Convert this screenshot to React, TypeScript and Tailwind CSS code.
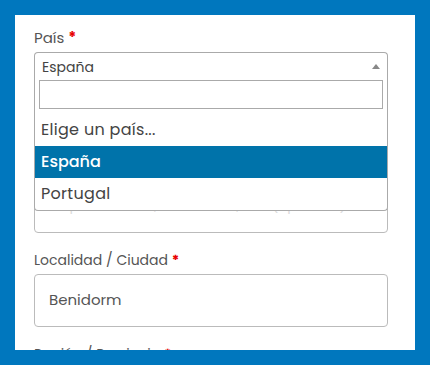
import React from "react";

const font = { fontFamily: "Poppins, Inter, 'Noto Sans', sans-serif" };

function Label({ text }: { text: string }) {
  return (
    <label className="block text-[14px] leading-[20px] text-[#555] mb-[4px]">
      {text} <span className="text-[#e80000] font-bold">*</span>
    </label>
  );
}

export default function App() {
  const options = ["Elige un país...", "España", "Portugal"];

  return (
    <div className="h-[365px] w-[430px] bg-[#0077be] p-[15px] overflow-hidden" style={font}>
      <div className="h-[335px] bg-white pl-[19px] pr-[27px] pt-[13px] overflow-hidden">
        {/* País select, open */}
        <label className="block text-[15px] leading-[20px] text-[#555] mb-[4px]">
          País <span className="text-[#e80000] font-bold">*</span>
        </label>
        <div className="relative">
          <div className="h-[28px] border border-b-0 border-[#aaa] rounded-t-[4px] flex items-center justify-between pl-[7px] pr-[7px]">
            <span className="text-[14px] text-[#444] leading-[28px]">España</span>
            <span className="w-0 h-0 border-x-[4px] border-x-transparent border-b-[5px] border-b-[#888]" />
          </div>
          <div className="absolute top-full left-0 right-0 z-10 bg-white border border-t-0 border-[#aaa] rounded-b-[4px]">
            <div className="px-[4px] pb-[5px]">
              <input className="block w-full h-[29px] border border-[#aaa] outline-none px-[4px] text-[14px]" />
            </div>
            <ul>
              {options.map((o) => (
                <li
                  key={o}
                  className={
                    o === "España"
                      ? "h-[32px] leading-[32px] pl-[6px] text-[16px] bg-[#0073aa] text-white font-medium"
                      : "h-[32px] leading-[32px] pl-[6px] text-[16px] text-[#444] tracking-[0.3px]"
                  }
                >
                  {o}
                </li>
              ))}
            </ul>
          </div>
        </div>

        {/* Dirección, mostly under the dropdown */}
        <div className="mt-[17px]">
          <Label text="Dirección de la calle" />
          <input
            className="block w-full h-[53px] border border-[#bbb] rounded-[4px] px-[14px] text-[16px]"
            placeholder="Número de la casa y nombre de la calle"
          />
          <input
            className="block w-full h-[53px] mt-[6px] border border-[#bbb] rounded-[4px] pl-[25px] pr-[10px] pb-[3px] text-[14px] placeholder-[#dcdcdc]"
            placeholder="Apartamento, habitación, etc. (opcional)"
          />
        </div>

        {/* Localidad */}
        <div className="mt-[17px]">
          <Label text="Localidad / Ciudad" />
          <div className="h-[53px] border border-[#bbb] rounded-[4px] flex items-center px-[14px]">
            <span className="text-[15px] text-[#555]">Benidorm</span>
          </div>
        </div>

        <div className="mt-[17px]">
          <Label text="Región / Provincia" />
        </div>
      </div>
    </div>
  );
}
